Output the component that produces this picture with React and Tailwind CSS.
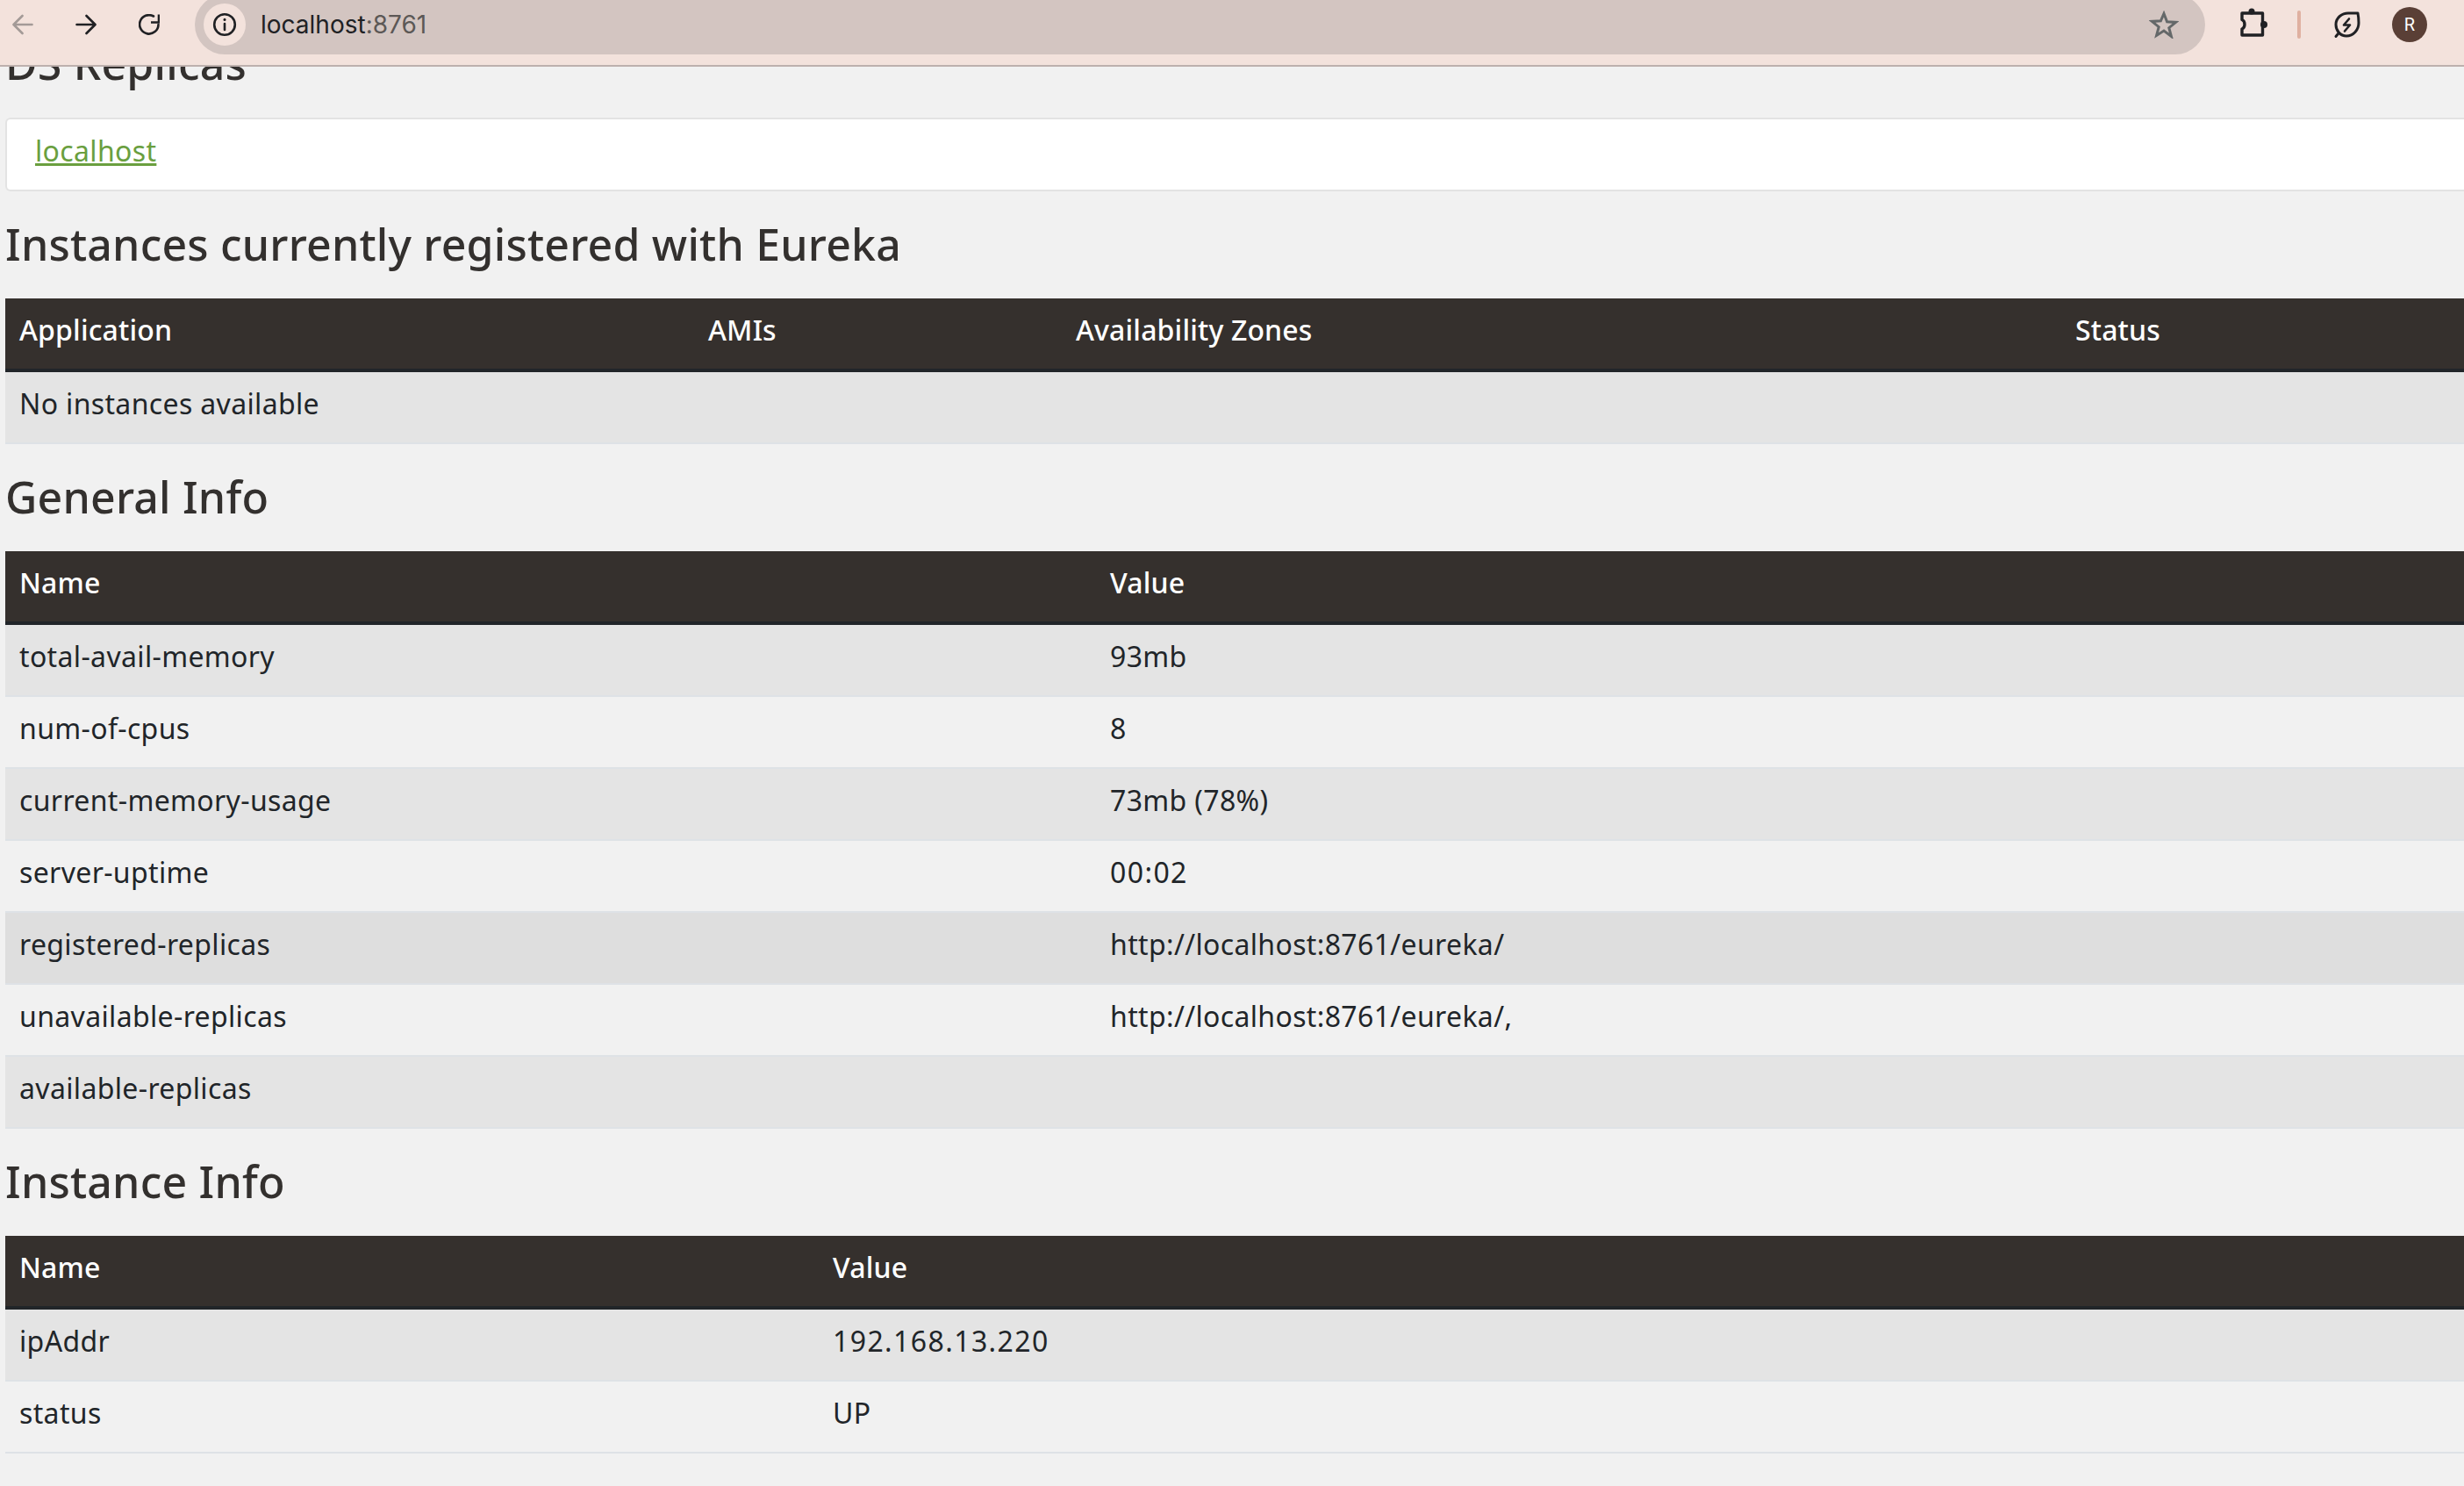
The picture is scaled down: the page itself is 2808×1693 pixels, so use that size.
const general = [
  { name: "total-avail-memory", value: "93mb", bg: "bg-[#e4e4e4]" },
  { name: "num-of-cpus", value: "8", bg: "bg-[#f1f1f1]" },
  { name: "current-memory-usage", value: "73mb (78%)", bg: "bg-[#e4e4e4]" },
  { name: "server-uptime", value: "00:02", bg: "bg-[#f1f1f1]", digits: true },
  { name: "registered-replicas", value: "http://localhost:8761/eureka/", bg: "bg-[#dedede]" },
  { name: "unavailable-replicas", value: "http://localhost:8761/eureka/,", bg: "bg-[#f1f1f1]" },
  { name: "available-replicas", value: "", bg: "bg-[#e4e4e4]" },
];

const instance = [
  { name: "ipAddr", value: "192.168.13.220", bg: "bg-[#e4e4e4]", digits: true },
  { name: "status", value: "UP", bg: "bg-[#f1f1f1]" },
];

function ToolIcon({ children, className = "" }) {
  return (
    <svg width="24" height="24" viewBox="0 0 24 24" fill="none" stroke="currentColor" strokeWidth="2.6" strokeLinecap="round" strokeLinejoin="round" className={className}>
      {children}
    </svg>
  );
}

function Heading({ children, className = "" }) {
  return <h2 className={`flex h-[122px] items-center pb-[3px] pl-[6px] text-[50px] font-medium tracking-[0.2px] text-[#33302e] ${className}`}>{children}</h2>;
}

function HeadCell({ children, className = "" }) {
  return <div className={`px-4 pt-[12px] font-medium tracking-[0.15px] text-white ${className}`}>{children}</div>;
}

function Cell({ children, className = "" }) {
  return <div className={`h-[80px] px-4 pt-[12px] text-[#212529] ${className}`}>{children}</div>;
}

function InfoTable({ rows, nameCol }) {
  return (
    <div className="ml-[6px]">
      <div className="flex h-[84px] border-b-4 border-[#212529] bg-[#35302d]">
        <HeadCell className={nameCol}>Name</HeadCell>
        <HeadCell>Value</HeadCell>
      </div>
      {rows.map((row) => (
        <div key={row.name} className={`flex h-[82px] border-b-2 border-[#dee2e6] ${row.bg}`}>
          <Cell className={nameCol}>{row.name}</Cell>
          <Cell className={row.digits ? "tracking-[1.4px]" : ""}>{row.value}</Cell>
        </div>
      ))}
    </div>
  );
}

export default function App() {
  return (
    <div className="flex h-[1693px] w-[2808px] flex-col overflow-hidden bg-[#f1f1f1] font-['Noto_Sans',sans-serif] text-[32px] leading-[48px] tracking-[0.35px]">
      <header className="flex h-[76px] shrink-0 border-b-2 border-[#bdb0ad] bg-[#f3e2dc]">
        <div className="flex h-[56px] items-center gap-[48px] pl-[14px] text-[#202124]">
          <ToolIcon className="text-[#a39a97]">
            <path d="M22.5 12H2M11.5 2 1.5 12l10 10" />
          </ToolIcon>
          <ToolIcon>
            <path d="M1.5 12H22M12.5 2l10 10-10 10" />
          </ToolIcon>
          <ToolIcon>
            <path d="M22.5 12A10.7 10.7 0 1 1 17 2.500" />
            <path d="M23 0.500v9h-9" strokeLinecap="butt" strokeLinejoin="miter" />
          </ToolIcon>
        </div>
        <div className="-mt-[6px] ml-[40px] flex h-[68px] w-[2291px] items-center rounded-full bg-[#d3c5c1] pl-[10px]">
          <div className="flex h-[48px] w-[48px] items-center justify-center rounded-full bg-[#f3e2dc]">
            <svg width="28" height="28" viewBox="0 0 28 28" fill="none" stroke="#202124" strokeWidth="2.6" strokeLinecap="round">
              <circle cx="14" cy="14" r="11.8" />
              <path d="M14 13v7" />
              <path d="M14 8.2v.2" strokeWidth="3" />
            </svg>
          </div>
          <span className="ml-[17px] font-['Inter',sans-serif] text-[28px] leading-none tracking-normal text-[#202124]">
            localhost<span className="text-[#5c5856]">:8761</span>
          </span>
          <svg width="34" height="32" viewBox="0 0 34 32" fill="none" stroke="#646869" strokeWidth="3" strokeLinejoin="miter" className="ml-auto mr-[30px]">
            <path d="M17 3.5l3.6 9.3 10 .6-7.8 6.3 2.6 9.7L17 23l-8.4 5.4 2.6-9.7-7.8-6.3 10-.6z" />
          </svg>
        </div>
        <div className="relative h-[56px] flex-1 text-[#202124]">
          <svg width="36" height="36" viewBox="0 0 36 36" fill="none" stroke="currentColor" strokeWidth="3.4" strokeLinejoin="round" className="absolute left-[35px] top-[8px]">
            <path d="M7 7H30.500V32H7V25C11 23.500 11 16 7 14.500V7z" />
            <circle cx="18" cy="5" r="3.500" fill="currentColor" stroke="none" />
            <circle cx="32" cy="20" r="4" fill="currentColor" stroke="none" />
          </svg>
          <div className="absolute left-[105px] top-[12px] h-[32px] w-[4px] rounded-full bg-[#dfb0a0]" />
          <svg width="32" height="32" viewBox="0 0 32 32" fill="none" stroke="currentColor" strokeWidth="3" strokeLinecap="round" strokeLinejoin="round" className="absolute left-[145px] top-[12px]">
            <path d="M29 3C29 3 30 8 30 14 30 22 24 29 16 29 9 29 4 23 4 16 4 8 11 3 18 3z" />
            <path d="M6.500 26.500 4 29.500" />
            <path d="M19 9.500l-6 7h7l-6 7" strokeWidth="2.6" />
          </svg>
          <div className="absolute left-[213px] top-[8px] flex h-[40px] w-[40px] items-center justify-center rounded-full bg-[#5a3f36] font-['Roboto',sans-serif] text-[20px] leading-none text-white">
            R
          </div>
        </div>
      </header>

      <main className="min-h-0 flex-1 overflow-hidden">
        <Heading className="-mt-[64px]">DS Replicas</Heading>
        <div className="ml-[6px] h-[84px] rounded-l-[6px] border-2 border-r-0 border-[#e3e3e3] bg-white pl-[32px] pt-[12px]">
          <a href="#" className="text-[#6a9f3f] underline">localhost</a>
        </div>

        <Heading>Instances currently registered with Eureka</Heading>
        <div className="ml-[6px]">
          <div className="flex h-[84px] border-b-4 border-[#212529] bg-[#35302d]">
            <HeadCell className="w-[785px]">Application</HeadCell>
            <HeadCell className="w-[419px]">AMIs</HeadCell>
            <HeadCell className="w-[1139px]">Availability Zones</HeadCell>
            <HeadCell>Status</HeadCell>
          </div>
          <div className="h-[82px] border-b-2 border-[#dee2e6] bg-[#e4e4e4]">
            <Cell>No instances available</Cell>
          </div>
        </div>

        <Heading>General Info</Heading>
        <InfoTable rows={general} nameCol="w-[1243px]" />

        <Heading>Instance Info</Heading>
        <InfoTable rows={instance} nameCol="w-[927px]" />
      </main>
    </div>
  );
}
